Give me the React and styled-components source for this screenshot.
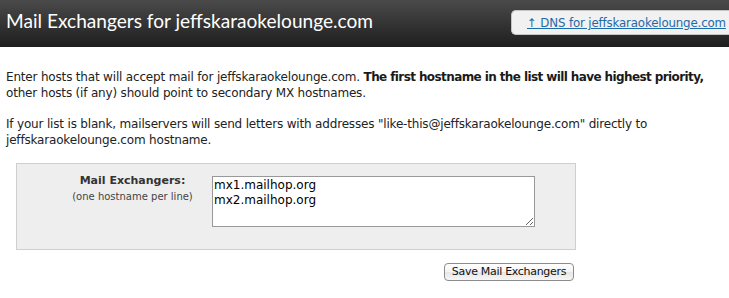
import React from "react";
import styled, { createGlobalStyle } from "styled-components";

const Global = createGlobalStyle`
  html, body { margin: 0; padding: 0; background: #fff; overflow: hidden; }
  body { font-family: "DejaVu Sans", Verdana, sans-serif; color: #222; }
`;

const Header = styled.header`
  height: 47px;
  background: linear-gradient(#4a4a4a, #1e1e1e);
  display: flex;
  align-items: flex-start;
  justify-content: space-between;
  padding-left: 6px;
`;

const Title = styled.h1`
  margin: 10px 0 0;
  font-family: Lato, "Open Sans", sans-serif;
  font-weight: 400;
  font-size: 19.1px;
  line-height: 22px;
  color: #fff;
  white-space: nowrap;
`;

const DnsBox = styled.div`
  margin-top: 10px;
  height: 25px;
  width: 218px;
  flex-shrink: 0;
  box-sizing: border-box;
  background: #f1f1f1;
  border: 1px solid #c4c4c4;
  border-right: none;
  border-radius: 5px 0 0 5px;
  display: flex;
  align-items: center;
  padding-left: 15px;
`;

const DnsLink = styled.a`
  font-family: "DejaVu Sans", sans-serif;
  font-size: 11.8px;
  letter-spacing: -0.15px;
  color: #1f6aa8;
  text-decoration: underline;
  white-space: nowrap;
  padding-top: 1px;
`;

const Content = styled.main`
  padding: 22px 6px 0;
`;

const Para = styled.p`
  margin: 0 0 15px;
  font-size: 12px;
  letter-spacing: -0.18px;
  line-height: 16px;
  color: #222;
  white-space: nowrap;
`;

const Strong = styled.b`
  font-weight: bold;
  letter-spacing: -0.6px;
  color: #1a1a1a;
`;

const FormBox = styled.div`
  margin: 0 0 0 10px;
  width: 560px;
  height: 87px;
  box-sizing: border-box;
  background: #eeeeee;
  border: 1px solid #cfcfcf;
  display: flex;
  align-items: flex-start;
  padding-top: 12px;
`;

const LabelCol = styled.div`
  width: 195px;
  box-sizing: border-box;
  padding-left: 36px;
  text-align: center;
`;

const Label = styled.div`
  font-weight: bold;
  font-size: 11px;
  line-height: 10px;
  color: #333;
  white-space: nowrap;
`;

const Hint = styled.div`
  font-size: 10px;
  line-height: 12px;
  color: #444;
  margin-top: 5px;
  white-space: nowrap;
`;

const TextArea = styled.textarea`
  margin: 0;
  width: 323px;
  height: 51px;
  box-sizing: border-box;
  border: 1px solid #999;
  padding: 1px 1px;
  font-family: "DejaVu Sans", sans-serif;
  font-size: 12px;
  line-height: 15px;
  color: #000;
  resize: both;
  background: #fff;
  outline: none;
`;

const ButtonRow = styled.div`
  width: 568px;
  display: flex;
  justify-content: flex-end;
  margin-top: 13px;
`;

const Button = styled.button`
  height: 18px;
  width: 130px;
  padding: 0;
  font-family: "DejaVu Sans", sans-serif;
  font-size: 11px;
  letter-spacing: -0.3px;
  line-height: 16px;
  color: #111;
  border: 1px solid #8c8c8c;
  border-radius: 4px;
  background: linear-gradient(#ffffff, #f3f3f3 50%, #e6e6e6 51%, #f6f6f6);
  white-space: nowrap;
`;

export default function App() {
  return (
    <>
      <Global />
      <Header>
        <Title>Mail Exchangers for jeffskaraokelounge.com</Title>
        <DnsBox>
          <DnsLink href="#">↑ DNS for jeffskaraokelounge.com</DnsLink>
        </DnsBox>
      </Header>
      <Content>
        <Para>
          Enter hosts that will accept mail for jeffskaraokelounge.com.{" "}
          <Strong>The first hostname in the list will have highest priority,</Strong>
          <br />
          other hosts (if any) should point to secondary MX hostnames.
        </Para>
        <Para>
          If your list is blank, mailservers will send letters with addresses
          "like-this@jeffskaraokelounge.com" directly to
          <br />
          jeffskaraokelounge.com hostname.
        </Para>
        <FormBox>
          <LabelCol>
            <Label>Mail Exchangers:</Label>
            <Hint>(one hostname per line)</Hint>
          </LabelCol>
          <TextArea defaultValue={"mx1.mailhop.org\nmx2.mailhop.org"} />
        </FormBox>
        <ButtonRow>
          <Button>Save Mail Exchangers</Button>
        </ButtonRow>
      </Content>
    </>
  );
}
